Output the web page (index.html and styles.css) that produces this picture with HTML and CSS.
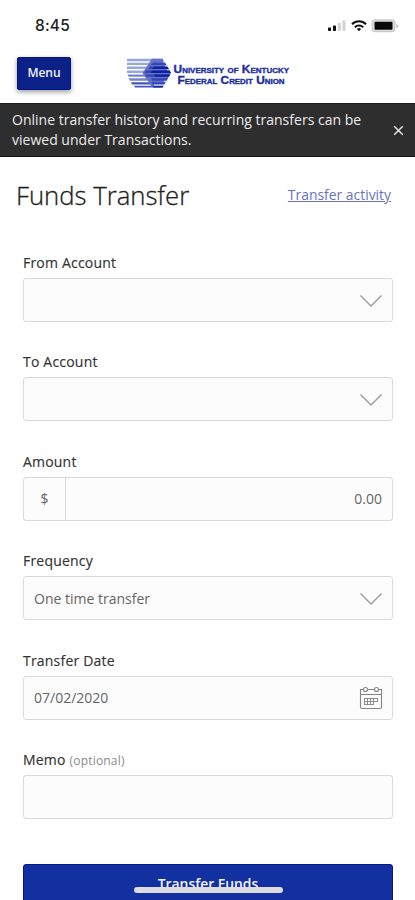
FILE: index.html
```html
<!DOCTYPE html>
<html lang="en">
<head>
<meta charset="utf-8">
<title>Funds Transfer</title>
<link rel="stylesheet" href="styles.css">
</head>
<body>
<div class="screen">
  <div class="status">
    <span class="time">8:45</span>
    <svg class="status-icons" width="74" height="16" viewBox="0 0 74 16">
      <rect x="1" y="9.5" width="3" height="3.5" rx=".7" fill="#111"/>
      <rect x="6" y="7.5" width="3" height="5.5" rx=".7" fill="#111"/>
      <rect x="10.8" y="5" width="3" height="8" rx=".7" fill="#d2d2d2"/>
      <rect x="15.5" y="2.5" width="3" height="10.5" rx=".7" fill="#d2d2d2"/>
      <g fill="none" stroke="#111" stroke-width="2">
        <path d="M25 6.2a10 10 0 0 1 14 0"/>
        <path d="M27.8 9.3a6 6 0 0 1 8.400 0"/>
      </g>
      <path d="M29.9 11.1a3 3 0 0 1 4.200 0L32 13.200z" fill="#111"/>
      <rect x="45.200" y="1.900" width="22.600" height="11.800" rx="3.400" fill="#dedede" stroke="#c8c8c8" stroke-width="1.200"/>
      <rect x="47.500" y="3.800" width="18" height="8" rx="1" fill="#080808"/>
      <path d="M69.400 6c2.200.5 2.200 3.400 0 4z" fill="#bbb"/>
    </svg>
  </div>
  <header class="header">
    <button class="menu">Menu</button>
    <svg class="logo" width="164" height="32" viewBox="0 0 164 32">
      <g fill="#98a5dc">
        <path d="M1 1.800h36v2.400H1zM1 5.700h26v2.400H1zM1 9.600h22v2.400H1zM1 13.500h17v2.400H1z"/>
        <path d="M1.500 17.400H19v2.400H2.500zM2.500 21.300H22v2.400H4z" fill="#7484ce"/>
        <path d="M5 25.200h20v2.300H6zM8 28.800h20v1.800H9z" fill="#4456bb"/>
      </g>
      <path d="M26 1.800h10.500L45 16l-8 13.500H25.500L16.500 16z" fill="#6272c6"/>
      <g fill="#3345b4">
        <path d="M27 5.700h12l1.400 2.400H25zM24 9.600h17.400l1.400 2.400H22zM20 13.500h23.600l1.300 2.400H18zM19 17.400h25.200l-1.400 2.400H20.500z"/>
        <path d="M25 21.300h17l-1.400 2.400H26zM25 25.200h14.500l-1.400 2.300H27zM26 28.800h11.500l-1 1.800H27z"/>
      </g>
      <path d="M28 9.600h13.400l1.400 2.400H26zM26 13.500h17.600l1.300 2.400H25zM28 17.400h16.200l-1.400 2.400H29zM28 28.800h9.500l-1 1.800H28z" fill="#1020a0"/>
      <path d="M37 4.950h2M39 8.850h3M41 12.750h3M42 20.550h2M38 24.450h4M28 28.150h11" stroke="#d4daf2" stroke-width="1.200"/>
      <text class="logo-text" x="47.500" y="16" textLength="115.500" lengthAdjust="spacingAndGlyphs">University of Kentucky</text>
      <text class="logo-text" x="51.500" y="26.500" textLength="107" lengthAdjust="spacingAndGlyphs">Federal Credit Union</text>
    </svg>
  </header>
  <div class="notice">
    <p class="notice-text">Online transfer history and recurring transfers can be<br>viewed under Transactions.</p>
    <svg class="close" width="11" height="11" viewBox="0 0 11 11"><path d="M1.200 1.200l8.600 8.600M9.800 1.200l-8.600 8.600" stroke="#e4e4e4" stroke-width="1.500"/></svg>
  </div>
  <div class="heading">
    <h1 class="title">Funds Transfer</h1>
    <a class="activity" href="#">Transfer activity</a>
  </div>
  <form class="form">
    <div class="field">
      <label class="label">From Account</label>
      <div class="box"><svg class="chevron" width="24" height="14" viewBox="0 0 24 14"><path d="M1.500 1.500L12 12 22.500 1.500"/></svg></div>
    </div>
    <div class="field">
      <label class="label">To Account</label>
      <div class="box"><svg class="chevron" width="24" height="14" viewBox="0 0 24 14"><path d="M1.500 1.500L12 12 22.500 1.500"/></svg></div>
    </div>
    <div class="field">
      <label class="label">Amount</label>
      <div class="box money"><span class="currency">$</span><span class="zero">0.00</span></div>
    </div>
    <div class="field">
      <label class="label">Frequency</label>
      <div class="box"><span class="value">One time transfer</span><svg class="chevron" width="24" height="14" viewBox="0 0 24 14"><path d="M1.500 1.500L12 12 22.500 1.500"/></svg></div>
    </div>
    <div class="field">
      <label class="label">Transfer Date</label>
      <div class="box"><span class="value">07/02/2020</span>
        <svg class="calendar" width="24" height="24" viewBox="0 0 24 24" fill="none" stroke="#858585" stroke-width="1.100">
          <path d="M4.500 3.500H1.500v17.500q0 1.500 1.500 1.500h18q1.500 0 1.500-1.500V3.500h-3M8.500 3.500h7M1.500 8.500h21"/>
          <circle cx="6.500" cy="3.500" r="2"/><circle cx="17.500" cy="3.500" r="2"/>
          <path d="M5 12.500h14M5 15.500h14M5 18.500h10M5.500 12v7M8.500 12v7M11.500 12v7M14.500 12v7M18.500 12v4" stroke-width=".9"/>
        </svg>
      </div>
    </div>
    <div class="field">
      <label class="label">Memo <span class="optional">(optional)</span></label>
      <div class="box"></div>
    </div>
    <div class="submit"><span class="submit-text">Transfer Funds</span></div>
  </form>
  <div class="home-bar"></div>
</div>
</body>
</html>
```
FILE: styles.css
```css
* { box-sizing: border-box; }
body { margin: 0; background: #fff; font-family: "Open Sans", "Noto Sans", sans-serif; color: #333; }
.screen { position: relative; width: 415px; height: 900px; overflow: hidden; display: flex; flex-direction: column; }
.status { height: 50px; flex: none; display: flex; align-items: center; justify-content: space-between; padding: 1px 14px 0 35px; }
.time { font: 500 15.500px/20px Inter, sans-serif; letter-spacing: .2px; color: #222; }
.header { height: 53px; flex: none; display: flex; align-items: flex-start; padding: 7px 17px 0; gap: 55px; }
.menu { width: 54px; height: 33px; padding: 0 0 2px; border: 1px solid #06148a; border-radius: 2px; background: #0b2188; color: #f2f4ff; font: 600 12px/30px "Open Sans", sans-serif; box-shadow: 0 2px 5px rgba(0, 0, 0, .4); }
.logo { flex: none; }
.logo-text { font: 700 10.500px "Liberation Sans", sans-serif; font-variant: small-caps; fill: #1c309f; stroke: #1c309f; stroke-width: .35px; }
.notice { height: 54px; flex: none; display: flex; align-items: center; justify-content: space-between; padding: 0 11px 0 12px; background: #2e2e2e; border-top: 1px solid #1c1c1c; border-bottom: 1px solid #111; }
.notice-text { margin: 0; font-size: 14px; line-height: 20px; letter-spacing: .01px; color: #ececec; white-space: nowrap; }
.heading { height: 93px; flex: none; display: flex; justify-content: space-between; padding: 18px 24px 0 16px; }
.title { margin: 0; font-weight: 300; font-size: 25.700px; line-height: 41px; color: #222; white-space: nowrap; -webkit-text-stroke: .3px #222; }
.activity { font-size: 13.900px; line-height: 39px; color: #6873bd; text-decoration: underline; white-space: nowrap; }
.form { display: flex; flex-direction: column; gap: 27.400px; padding: 0 22px 0 23px; }
.field { height: 72px; flex: none; display: flex; flex-direction: column; justify-content: space-between; }
.label { font-size: 14px; line-height: 25px; letter-spacing: .2px; color: #333; white-space: nowrap; -webkit-text-stroke: .15px #333; }
.optional { font-size: 12px; color: #8b8b8b; -webkit-text-stroke: 0; }
.box { height: 44px; display: flex; align-items: center; justify-content: space-between; border: 1px solid #d9d9d9; border-radius: 3px; background: #fcfcfc; padding: 0 9px 0 10px; font-size: 14px; color: #666; }
.chevron { margin: 2px 0 0 auto; fill: none; stroke: #999; stroke-width: 1.300; }
.money { padding: 0 10px 0 0; }
.currency { width: 42px; height: 42px; line-height: 42px; text-align: center; border-right: 1px solid #d9d9d9; }
.submit { height: 46px; margin-top: 17.500px; background: #12309f; border: 1px solid #07178c; border-radius: 3px; text-align: center; }
.submit-text { font-size: 13.900px; font-weight: 600; line-height: 38px; color: #f2f4ff; }
.home-bar { position: absolute; left: 134px; top: 886.500px; width: 149px; height: 6.500px; border-radius: 4px; background: #dcdce0; }
```
